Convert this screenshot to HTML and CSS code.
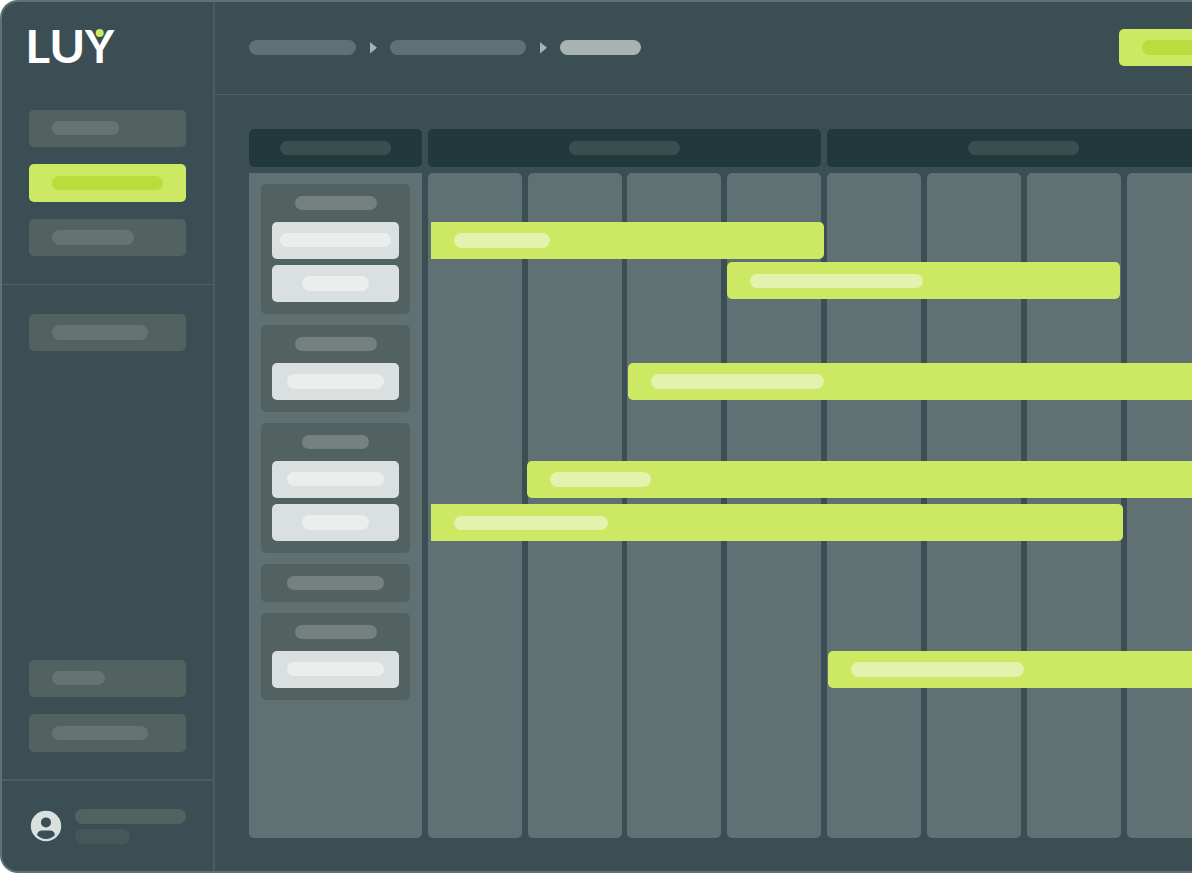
FILE: index.html
```html
<!DOCTYPE html>
<html lang="en">
<head>
<meta charset="UTF-8">
<meta name="viewport" content="width=device-width, initial-scale=1.0">
<title>LUY - Roadmap</title>
<link rel="stylesheet" href="styles.css">
</head>
<body>
    <div class="app">
        <aside class="sidebar">
            <!-- Logo + main menu -->
            <div class="menu menu-main">
                <svg class="logo" width="90" height="38" viewBox="0 0 90 38">
                    <text class="logo-text" transform="translate(-3.700 33.900) scale(1.060 1)">L</text>
                    <text class="logo-text" transform="translate(20.200 33.900) scale(1.080 1)">U</text>
                    <text class="logo-text" transform="translate(55.900 33.900)">Y</text>
                    <circle class="logo-dot" cx="70.700" cy="4" r="4" />
                </svg>
                <a class="menu-item"><span class="pill w-47"></span></a>
                <a class="menu-item active"><span class="pill w-77"></span></a>
                <a class="menu-item"><span class="pill w-57"></span></a>
            </div>

            <div class="menu menu-sub">
                <a class="menu-item"><span class="pill w-67"></span></a>
            </div>

            <div class="menu menu-bottom">
                <a class="menu-item"><span class="pill w-37"></span></a>
                <a class="menu-item"><span class="pill w-67"></span></a>
            </div>

            <!-- User -->
            <div class="user">
                <svg class="avatar" width="32" height="32" viewBox="0 0 32 32">
                    <circle class="avatar-bg" cx="16" cy="16" r="15.2" />
                    <circle class="avatar-fg" cx="16" cy="12.4" r="5" />
                    <path class="avatar-fg" d="M7.2 25.2c0-3.4 2.6-4.8 5.2-4.8h7.2c2.6 0 5.2 1.4 5.2 4.8c-2.4 2.4-5.4 3.7-8.8 3.7s-6.4-1.3-8.8-3.7z" />
                </svg>
                <div class="user-info">
                    <span class="pill w-77"></span>
                    <span class="pill user-role"></span>
                </div>
            </div>
        </aside>

        <main class="main">
            <header class="topbar">
                <div class="breadcrumb">
                    <span class="pill crumb-first"></span>
                    <svg class="arrow" width="7" height="12" viewBox="0 0 7 12"><path d="M0 0L7 5.700L0 11.400z" /></svg>
                    <span class="pill crumb-second"></span>
                    <svg class="arrow" width="7" height="12" viewBox="0 0 7 12"><path d="M0 0L7 5.700L0 11.400z" /></svg>
                    <span class="pill crumb-current"></span>
                </div>
                <div class="top-button"><span class="pill w-77"></span></div>
            </header>

            <div class="board">
                <div class="list">
                    <div class="head"><span class="pill w-77"></span></div>
                    <div class="list-body">
                        <div class="group">
                            <span class="pill w-57"></span>
                            <div class="items">
                                <div class="item"><span class="pill w-77"></span></div>
                                <div class="item"><span class="pill w-47"></span></div>
                            </div>
                        </div>
                        <div class="group">
                            <span class="pill w-57"></span>
                            <div class="items">
                                <div class="item"><span class="pill w-67"></span></div>
                            </div>
                        </div>
                        <div class="group">
                            <span class="pill w-47"></span>
                            <div class="items">
                                <div class="item"><span class="pill w-67"></span></div>
                                <div class="item"><span class="pill w-47"></span></div>
                            </div>
                        </div>
                        <div class="group">
                            <span class="pill w-67"></span>
                        </div>
                        <div class="group">
                            <span class="pill w-57"></span>
                            <div class="items">
                                <div class="item"><span class="pill w-67"></span></div>
                            </div>
                        </div>
                    </div>
                </div>

                <div class="timeline">
                    <div class="periods">
                        <div class="head"><span class="pill w-77"></span></div>
                        <div class="head"><span class="pill w-77"></span></div>
                    </div>
                    <div class="columns">
                        <div class="column"></div>
                        <div class="column"></div>
                        <div class="column"></div>
                        <div class="column"></div>
                        <div class="column"></div>
                        <div class="column"></div>
                        <div class="column"></div>
                        <div class="column"></div>

                        <!-- Bars on top of the columns -->
                        <div class="bar started" style="left: 2.8px; top: 49px; width: 393px"><span class="pill" style="width: 96.5px"></span></div>
                        <div class="bar" style="left: 299.5px; top: 89.4px; width: 393px"><span class="pill" style="width: 173px"></span></div>
                        <div class="bar" style="left: 200px; top: 190.3px; width: 693px"><span class="pill" style="width: 173px"></span></div>
                        <div class="bar" style="left: 99.4px; top: 288.2px; width: 793px"><span class="pill" style="width: 101px"></span></div>
                        <div class="bar started" style="left: 2.8px; top: 331.4px; width: 692.6px"><span class="pill" style="width: 154px"></span></div>
                        <div class="bar" style="left: 400.3px; top: 478.3px; width: 493px"><span class="pill" style="width: 173px"></span></div>
                    </div>
                </div>
            </div>
        </main>
    </div>
</body>
</html>
```
FILE: styles.css
```css
* {
    box-sizing: border-box;
}
body {
    margin: 0;
    background: #fff;
    font-family: Lato, sans-serif;
    overflow: hidden;
}
.app {
    display: flex;
    height: 873px;
    background: #3a4e53;
    border: 2px solid #607174;
    border-right: none;
    border-radius: 18px 0 0 18px;
    overflow: hidden;
}

/* Placeholder lines */
.pill {
    display: block;
    flex: none;
    height: 14.4px;
    border-radius: 8px;
}
.w-37 { width: 53.3px; }
.w-47 { width: 67.7px; }
.w-57 { width: 82.1px; }
.w-67 { width: 96.5px; }
.w-77 { width: 110.9px; }

/* Sidebar */
.sidebar {
    display: flex;
    flex-direction: column;
    flex: none;
    width: 213px;
    border-right: 2px solid #4a5d5f;
}
.menu {
    display: flex;
    flex-direction: column;
    gap: 17.28px;
    padding: 0 27.4px 27.3px 26.8px;
}
.menu-main {
    padding-top: 26.8px;
    border-bottom: 1px solid #526261;
}
.menu-sub {
    padding-top: 29.1px;
}
.menu-bottom {
    margin-top: auto;
    border-bottom: 2px solid #4b5e60;
}
.logo {
    display: block;
    margin-bottom: 25.5px;
    overflow: visible;
}
.logo-text {
    fill: #fff;
    font-size: 45px;
    font-weight: bold;
}
.logo-dot {
    fill: #cde863;
}
.menu-item {
    display: flex;
    align-items: center;
    height: 37.44px;
    padding-left: 23px;
    border-radius: 5px;
    background: #526261;
}
.menu-item .pill {
    background: #637473;
}
.menu-item.active {
    background: #cde863;
}
.menu-item.active .pill {
    background: #badc3d;
}
.user {
    display: flex;
    gap: 13px;
    height: 90px;
    padding: 28.3px 0 0 28px;
}
.avatar {
    margin-top: 1.2px;
}
.avatar-bg {
    fill: #dae0e0;
}
.avatar-fg {
    fill: #3a4e53;
}
.user-info {
    display: flex;
    flex-direction: column;
    gap: 5.7px;
}
.user-info .pill {
    background: #526261;
}
.user-info .user-role {
    width: 55px;
    background: #455859;
}

/* Top bar */
.main {
    flex: 1;
    min-width: 0;
}
.topbar {
    display: flex;
    justify-content: space-between;
    height: 93px;
    padding: 26.8px 0 0 34px;
    border-bottom: 1px solid #526261;
}
.breadcrumb {
    display: flex;
    align-items: center;
    height: 37.44px;
}
.breadcrumb .pill {
    background: #607174;
}
.breadcrumb .crumb-first {
    width: 107px;
}
.breadcrumb .crumb-second {
    width: 135.5px;
}
.breadcrumb .crumb-current {
    width: 81px;
    background: #a8b3b3;
}
.arrow {
    margin: 0 13px 0 14px;
    fill: #a8b3b3;
}
.top-button {
    display: flex;
    align-items: center;
    width: 73px;
    height: 37.44px;
    padding-left: 23px;
    border-radius: 5px 0 0 5px;
    background: #cde863;
    overflow: hidden;
}
.top-button .pill {
    background: #badc3d;
}

/* Board */
.board {
    display: flex;
    gap: 5.76px;
    padding: 34.45px 0 0 34.2px;
}
.head {
    display: flex;
    align-items: center;
    justify-content: center;
    height: 37.44px;
    border-radius: 5px;
    background: #21393d;
}
.head .pill {
    background: #3b4e4f;
}
.list {
    flex: none;
    width: 172.8px;
}
.list-body {
    display: flex;
    flex-direction: column;
    gap: 11.52px;
    height: 665.3px;
    margin-top: 5.76px;
    padding: 11.52px;
    border-radius: 0 0 5px 5px;
    background: #607174;
}
.group {
    display: flex;
    flex-direction: column;
    align-items: center;
    gap: 11.52px;
    padding: 11.52px;
    border-radius: 5px;
    background: #526261;
}
.group > .pill {
    background: #75817f;
}
.items {
    display: flex;
    flex-direction: column;
    gap: 5.76px;
    width: 100%;
}
.item {
    display: flex;
    align-items: center;
    justify-content: center;
    height: 37.44px;
    border-radius: 5px;
    background: #dae0e0;
}
.item .pill {
    background: #eceeee;
}

/* Timeline, runs past the right edge */
.timeline {
    flex: 1;
    min-width: 0;
    overflow: hidden;
}
.periods {
    display: grid;
    grid-template-columns: repeat(2, 393.6px);
    gap: 5.76px;
}
.columns {
    position: relative;
    display: grid;
    grid-template-columns: repeat(8, 94.08px);
    gap: 5.76px;
    height: 665.3px;
    margin-top: 5.76px;
}
.column {
    border-radius: 5px;
    background: #607174;
}
.bar {
    position: absolute;
    display: flex;
    align-items: center;
    height: 37.44px;
    padding-left: 23px;
    border-radius: 5px;
    background: #cde863;
}
.bar.started {
    border-radius: 0 5px 5px 0;
}
.bar .pill {
    background: #e3f2af;
}
```
